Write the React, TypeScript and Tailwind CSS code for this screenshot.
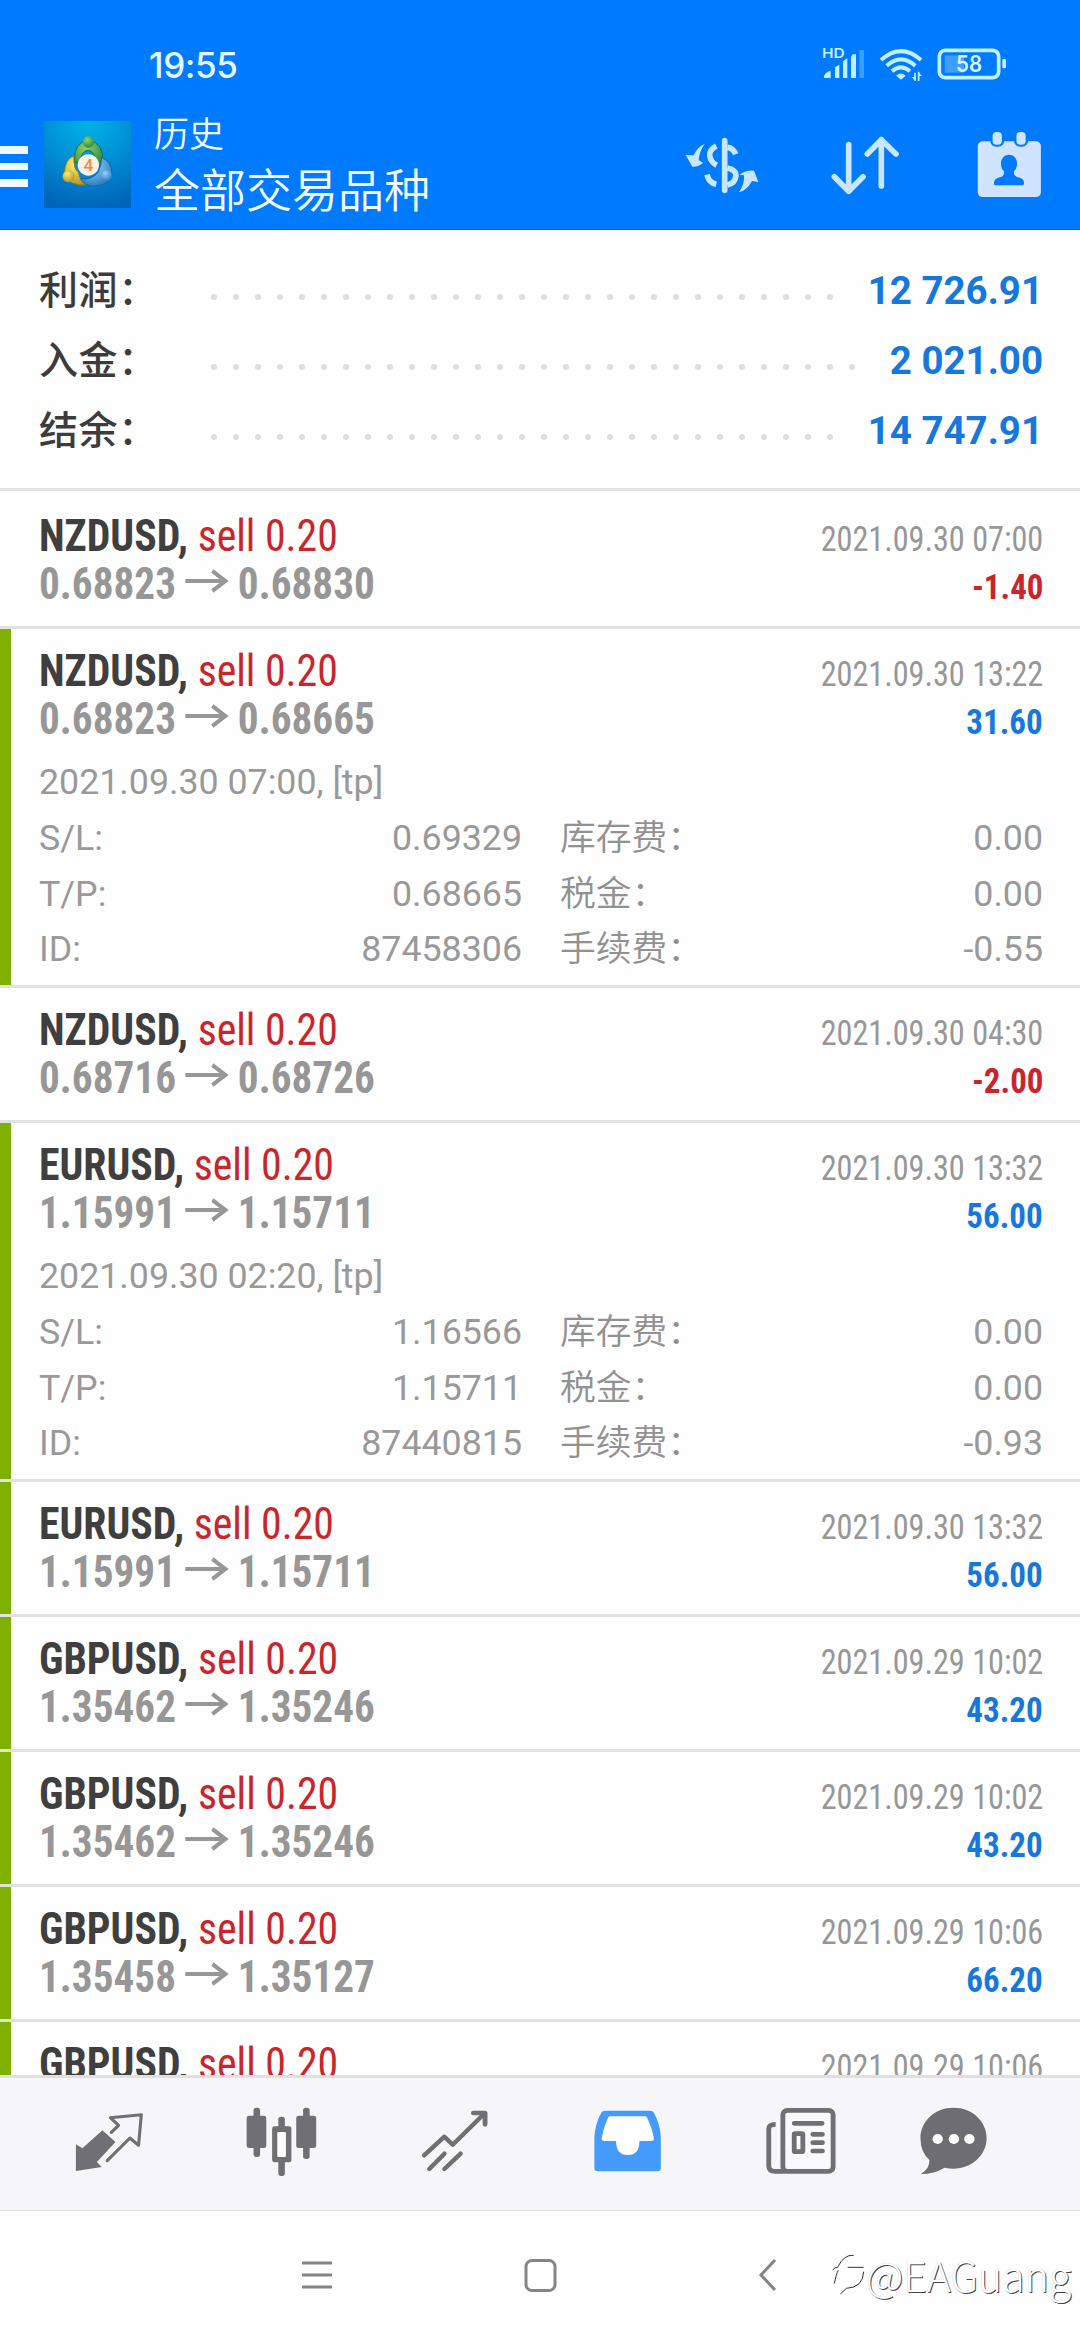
type Trade = {
  symbol: string;
  open: string;
  close: string;
  time: string;
  profit: string;
  tp?: boolean;
  details?: { comment: string; rows: [string, string, string, string][] };
};

const summary = [
  { label: "利润：", value: "12 726.91", dots: 29 },
  { label: "入金：", value: "2 021.00", dots: 30 },
  { label: "结余：", value: "14 747.91", dots: 29 },
];

const trades: Trade[] = [
  { symbol: "NZDUSD", open: "0.68823", close: "0.68830", time: "2021.09.30 07:00", profit: "-1.40" },
  {
    symbol: "NZDUSD", open: "0.68823", close: "0.68665", time: "2021.09.30 13:22", profit: "31.60", tp: true,
    details: {
      comment: "2021.09.30 07:00, [tp]",
      rows: [
        ["S/L:", "0.69329", "库存费：", "0.00"],
        ["T/P:", "0.68665", "税金：", "0.00"],
        ["ID:", "87458306", "手续费：", "-0.55"],
      ],
    },
  },
  { symbol: "NZDUSD", open: "0.68716", close: "0.68726", time: "2021.09.30 04:30", profit: "-2.00" },
  {
    symbol: "EURUSD", open: "1.15991", close: "1.15711", time: "2021.09.30 13:32", profit: "56.00", tp: true,
    details: {
      comment: "2021.09.30 02:20, [tp]",
      rows: [
        ["S/L:", "1.16566", "库存费：", "0.00"],
        ["T/P:", "1.15711", "税金：", "0.00"],
        ["ID:", "87440815", "手续费：", "-0.93"],
      ],
    },
  },
  { symbol: "EURUSD", open: "1.15991", close: "1.15711", time: "2021.09.30 13:32", profit: "56.00", tp: true },
  { symbol: "GBPUSD", open: "1.35462", close: "1.35246", time: "2021.09.29 10:02", profit: "43.20", tp: true },
  { symbol: "GBPUSD", open: "1.35462", close: "1.35246", time: "2021.09.29 10:02", profit: "43.20", tp: true },
  { symbol: "GBPUSD", open: "1.35458", close: "1.35127", time: "2021.09.29 10:06", profit: "66.20", tp: true },
  { symbol: "GBPUSD", open: "1.35458", close: "1.35127", time: "2021.09.29 10:06", profit: "66.20", tp: true },
];

function StatusBar() {
  return (
    <div className="flex h-[99px] items-start justify-between pl-[149px] pr-[73px]">
      <div className="mt-[41px] font-['Inter'] text-[35px] leading-[48px] font-medium tracking-[-0.4px] text-[#e6f8ff]">19:55</div>
      <div className="mt-[45px] flex gap-[13.5px]">
        <svg className="h-[37px] w-[43px]" viewBox="36 45 129 111" fill="#c3efff">
          <text x="36" y="84" fontSize="40" fontWeight="600" fontFamily="Inter, sans-serif" textLength="68" lengthAdjust="spacingAndGlyphs">HD</text>
          <path d="M42 144v-6q4-12 20-16v22zM75 144v-32l13-8v40zM99 144V94l13-10v60zM123 144V80l5-7h10v71z" />
          <path d="M148 60h14v84h-14z" opacity=".3" />
        </svg>
        <svg className="h-[37px] w-[45px]" viewBox="207 45 135 111" fill="none" stroke="#c3efff" strokeWidth="12">
          <path d="M213 90Q273 37 333 90M230 107Q273 69 316 107M246 124Q273 100 300 124" />
          <path d="M258 137Q273 124 287 137L273 149z" fill="#c3efff" stroke="none" />
          <path d="M315 152v-24M326 125v28" strokeWidth="5" />
          <path d="M305 141h12v13zM324 125v13h12z" fill="#c3efff" stroke="none" />
        </svg>
        <svg className="h-[37px] w-[70px]" viewBox="381 45 210 111">
          <rect x="388" y="61" width="178" height="82" rx="18" fill="none" stroke="#c3efff" strokeWidth="11" />
          <path d="M404 76h58v52h-58z" fill="#3f9fff" />
          <rect x="577" y="87" width="11" height="28" rx="4" fill="#c3efff" />
          <text x="477" y="127" fontSize="68" fontWeight="600" fontFamily="Inter, sans-serif" textAnchor="middle" textLength="78" lengthAdjust="spacingAndGlyphs" fill="#dcf6ff">58</text>
        </svg>
      </div>
    </div>
  );
}

function AppLogo() {
  return (
    <svg className="h-[87px] w-[87px]" viewBox="42 34 261 261">
      <defs>
        <radialGradient id="sky" cx=".5" cy="0" r="1">
          <stop offset="0" stopColor="#00b4e4" />
          <stop offset=".5" stopColor="#0090d6" />
          <stop offset="1" stopColor="#0065b8" />
        </radialGradient>
        <radialGradient id="green" cx=".4" cy=".3" r=".8">
          <stop offset="0" stopColor="#8fd06a" />
          <stop offset="1" stopColor="#23813a" />
        </radialGradient>
        <radialGradient id="gold" cx=".4" cy=".3" r=".8">
          <stop offset="0" stopColor="#ffec70" />
          <stop offset="1" stopColor="#a88d1c" />
        </radialGradient>
        <radialGradient id="blue" cx=".4" cy=".3" r=".8">
          <stop offset="0" stopColor="#8fd4fb" />
          <stop offset="1" stopColor="#1d70b8" />
        </radialGradient>
      </defs>
      <path d="M42 34h261v261H42z" fill="url(#sky)" />
      <path d="M133 156Q132 96 175 92Q220 96 219 158L203 176Q196 122 175 122Q154 122 149 160z" fill="url(#green)" stroke="#1b6b4c" strokeWidth="3" />
      <path d="M132 138Q104 148 103 192Q118 232 172 226Q148 212 146 188Q130 180 132 138z" fill="url(#gold)" stroke="#7b7b2c" strokeWidth="3" />
      <path d="M215 143Q246 156 246 194Q240 226 192 230Q160 228 152 206Q180 214 203 190Q214 172 215 143z" fill="url(#blue)" stroke="#1c64a3" strokeWidth="3" />
      <circle cx="175" cy="97" r="17" fill="url(#green)" />
      <circle cx="116" cy="200" r="18" fill="url(#gold)" />
      <circle cx="229" cy="198" r="17" fill="url(#blue)" />
      <circle cx="175" cy="166" r="32" fill="#f7f1ea" />
      <text x="175" y="184" fontSize="52" fontWeight="500" fontFamily="Roboto, sans-serif" textAnchor="middle" fill="#ef8b3e">4</text>
    </svg>
  );
}

function Header() {
  return (
    <header className="h-[230px] border-b border-[#2e5f95] bg-[#007aff]">
      <StatusBar />
      <div className="flex h-[131px] items-center">
        <div className="mt-1 flex w-7 flex-col gap-[9px]">
          <i className="h-[7.5px] bg-[#f0fbff]" />
          <i className="h-[7.5px] bg-[#f0fbff]" />
          <i className="h-[7.5px] bg-[#f0fbff]" />
        </div>
        <div className="ml-4"><AppLogo /></div>
        <div className="ml-[23px] w-[530px] font-['Noto_Sans_CJK_SC',sans-serif] font-[350] text-[#f2fcff]">
          <div className="-mt-1 text-[35px] leading-[50px]">历史</div>
          <div className="-mt-px text-[46px] leading-[62px]">全部交易品种</div>
        </div>
        <svg className="h-[58px] w-[77px]" viewBox="42 42 231 174" fill="none" stroke="#c9e6ff">
          <path d="M164 56v149" strokeWidth="17" strokeLinecap="round" />
          <path d="M197 97Q190 78 172 76M139 72Q117 84 119 101Q122 120 140 130M111 158Q116 182 139 187M172 138Q198 144 198 160Q196 184 172 189" strokeWidth="17" />
          <path d="M104 66Q82 74 71 100L47 99L67 134Q86 135 99 123L86 114Q88 88 104 66zM207 211Q224 186 222 160L209 158Q230 143 252 146L265 180L246 177Q232 205 207 211z" fill="#c9e6ff" stroke="none" />
        </svg>
        <svg className="ml-[69px] h-[60px] w-[70px]" viewBox="480 42 210 180" fill="none" stroke="#c9e6ff" strokeWidth="17" strokeLinecap="round" strokeLinejoin="round">
          <path d="M536 71v140M493 167l43 44 43-44M634 195V56M592 99l42-43 44 43" />
        </svg>
        <svg className="ml-[75px] h-[67px] w-[69px]" viewBox="1260 392 200 201" preserveAspectRatio="none">
          <rect x="1268" y="423" width="183" height="167" rx="14" fill="#d0e3ff" />
          <rect x="1304" y="386" width="41" height="53" rx="18" fill="#007aff" />
          <rect x="1373" y="386" width="41" height="53" rx="18" fill="#007aff" />
          <rect x="1311" y="395" width="27" height="38" rx="12" fill="#d0e3ff" />
          <rect x="1380" y="395" width="27" height="38" rx="12" fill="#d0e3ff" />
          <path d="M1359 463q23 1 23 30q-2 14-9 20q-2 14 12 18q17 4 17 16v3q0 5-6 5h-75q-6 0-6-5v-3q0-12 17-16q14-4 12-18q-7-6-9-20q0-29 24-30z" fill="#007aff" />
        </svg>
      </div>
    </header>
  );
}

function Summary() {
  return (
    <section className="h-[261px] border-b-3 border-[#e2e2e2] pt-[26px] pl-[39px] pr-[37px]">
      {summary.map((s) => (
        <div key={s.label} className="flex h-[70px] items-center">
          <div className="w-[163.5px] font-['Roboto','Noto_Sans_CJK_SC',sans-serif] text-[39px] leading-[70px] font-medium tracking-[0.6px] text-[#3c3c3c]">{s.label}</div>
          <div className="mt-[12px] flex">
            {Array.from({ length: s.dots }, (_, i) => (
              <i key={i} className="mx-[8px] size-[6px] rounded-full bg-[#dedede]" />
            ))}
          </div>
          <div className="ml-auto font-['Roboto'] text-[38.5px] leading-[70px] font-bold whitespace-nowrap text-[#1677dd]">{s.value}</div>
        </div>
      ))}
    </section>
  );
}

function TradeRow({ trade, first }: { trade: Trade; first: boolean }) {
  const profitColor = trade.profit.startsWith("-") ? "text-[#c9252b]" : "text-[#1677dd]";
  return (
    <div className={`shrink-0 border-b-3 border-[#e0e2e2] ${trade.details ? "h-[359px]" : first ? "h-[138px] pt-[3px]" : "h-[135px]"}`}>
      <div className={`h-full border-l-[11px] pt-[18px] pr-[37px] pl-7 ${trade.tp ? "border-[#7fb000]" : "border-transparent"}`}>
        <div className="flex h-12 items-baseline justify-between font-['Roboto_Condensed'] text-[44px] leading-[48px] whitespace-nowrap">
          <div className="origin-left scale-x-[0.949] font-bold text-[#3f3f3f]">
            {trade.symbol}, <span className="font-normal text-[#c9252b]">sell 0.20</span>
          </div>
          <div className="origin-right scale-x-[0.9] text-[35.75px] font-normal text-[#979797]">{trade.time}</div>
        </div>
        <div className="flex h-12 items-baseline justify-between font-['Roboto_Condensed'] text-[44px] leading-[48px] font-bold whitespace-nowrap text-[#979797]">
          <div className="flex origin-left scale-x-[0.937]">
            <span>{trade.open}</span>
            <svg className="mt-[9px] mr-[9px] ml-[10px] h-6 w-[47px]" viewBox="0 0 47 24" fill="none" stroke="#979797" strokeWidth="4">
              <path d="M0 12h43M29 2l14 10-14 10" />
            </svg>
            <span>{trade.close}</span>
          </div>
          <div className={`origin-right scale-x-[0.923] text-[35.75px] ${profitColor}`}>{trade.profit}</div>
        </div>
        {trade.details && (
          <div className="font-['Roboto'] text-[35.75px] font-normal text-[#999999]">
            <div className="mt-[11px] leading-[56px]">{trade.details.comment}</div>
            {trade.details.rows.map(([a, b, c, d]) => (
              <div key={a} className="flex h-[55.5px] leading-[56px]">
                <span>{a}</span>
                <span className="ml-auto">{b}</span>
                <span className="ml-[38px] w-[240px] font-['Roboto','Noto_Sans_CJK_SC',sans-serif] font-[350] text-[#919191]">{c}</span>
                <span className="w-[243px] text-right">{d}</span>
              </div>
            ))}
          </div>
        )}
      </div>
    </div>
  );
}

function TabBar() {
  const cell = "h-full w-[173.2px]";
  return (
    <nav className="flex h-[136px] border-t-3 border-b border-[#e0e0e2] bg-[#f6f6f8] pl-[21.5px]">
      <svg className={cell} viewBox="62.5 234 503 396" preserveAspectRatio="none">
        <path d="M219 433l19 12 58-54 38 35-54 60 14 15-75 12z" fill="#707072" />
        <path d="M322 397l21-21-24-23 90-9-8 92-25-22-66 68" fill="none" stroke="#707072" strokeWidth="9" strokeLinejoin="round" strokeLinecap="round" />
      </svg>
      <svg className={cell} viewBox="565 234 503 396" preserveAspectRatio="none" fill="#707072">
        <rect x="715" y="347" width="57" height="97" rx="7" />
        <rect x="735" y="323" width="19" height="148" rx="8" />
        <rect x="859" y="347" width="58" height="97" rx="7" />
        <rect x="879" y="323" width="19" height="154" rx="8" />
        <rect x="789" y="379" width="56" height="108" rx="7" />
        <rect x="807" y="350" width="19" height="178" rx="8" />
        <rect x="804" y="396" width="25" height="75" rx="3" fill="#fff" />
      </svg>
      <svg className={cell} viewBox="1068 234 503 396" preserveAspectRatio="none" fill="none" stroke="#707072" strokeWidth="13" strokeLinecap="round" strokeLinejoin="round">
        <path d="M1231 466l59-56 24 24 90-91M1246 507l44-46M1290 507l47-46" />
        <path d="M1374 339h34v34" strokeWidth="14" />
      </svg>
      <svg className={cell} viewBox="3 234 503 396" preserveAspectRatio="none">
        <path d="M188 332h132q8 0 11 6q19 36 20 76v90q0 10-10 10H168q-10 0-10-10v-90q1-40 20-76q3-6 10-6z" fill="#459bfc" />
        <path d="M204 349h101q5 0 7 6q14 29 19 60q0 8-8 8h-34q0 42-34 42t-34-42h-34q-8 0-8-8q5-30 18-60q2-6 7-6z" fill="#fff" />
      </svg>
      <svg className={cell} viewBox="505 234 503 396" preserveAspectRatio="none" fill="none" stroke="#707072" strokeWidth="14">
        <rect x="705" y="331" width="146" height="183" rx="13" fill="#f9f9fb" />
        <path d="M684 373q-20 0-20 14v111q0 16 18 16h30" />
        <path d="M738 370h81M792 403h28M792 428h28M792 453h28" strokeLinecap="round" />
        <rect x="738" y="401" width="25" height="54" rx="3" fill="#fff" />
      </svg>
      <svg className="h-full w-[131px]" viewBox="1006 234 380 396" preserveAspectRatio="none">
        <path d="M1199 323c53 0 96 40 96 91s-43 92-96 92q-14 0-26-3q-30 19-69 19q26-16 25-42q-26-24-26-66c0-51 43-91 96-91z" fill="#6e6e72" />
        <circle cx="1153" cy="417" r="15" fill="#fff" />
        <circle cx="1200" cy="417" r="15" fill="#fff" />
        <circle cx="1245" cy="417" r="15" fill="#fff" />
      </svg>
    </nav>
  );
}

function SystemNav() {
  return (
    <div className="relative flex h-[129px] items-center justify-center">
      <svg className="h-[34px] w-[480px]" viewBox="0 0 480 34" fill="none" stroke="#858585" strokeWidth="3">
        <path d="M2 4h30M2 16h30M2 28h30" />
        <rect x="226" y="1.5" width="29" height="30" rx="6" />
        <path d="M475 1L461 16l14 15" />
      </svg>
      <div className="absolute top-[38px] left-[832px] flex items-center">
        <svg className="h-[42px] w-[34px]" viewBox="34 66 100 126" fill="none" stroke="#333" strokeWidth="3">
          <path d="M36 118q4-11 14-9Q68 70 98 73M52 118Q46 128 40 158M80 109h48M128 122q-2 48-52 50l-18 17" />
        </svg>
        <div className="font-['Noto_Sans_CJK_SC'] text-[41px] leading-[50px] font-light whitespace-nowrap text-white [text-shadow:1px_1px_0_#444,0_0_1px_#bbb]">@EAGuang</div>
      </div>
    </div>
  );
}

export default function App() {
  return (
    <div className="flex h-[2340px] w-[1080px] flex-col overflow-hidden bg-[#fefefe]">
      <Header />
      <Summary />
      <main className="flex h-[1584px] flex-col overflow-hidden">
        {trades.map((t, i) => (
          <TradeRow key={i} trade={t} first={i === 0} />
        ))}
      </main>
      <TabBar />
      <SystemNav />
    </div>
  );
}
